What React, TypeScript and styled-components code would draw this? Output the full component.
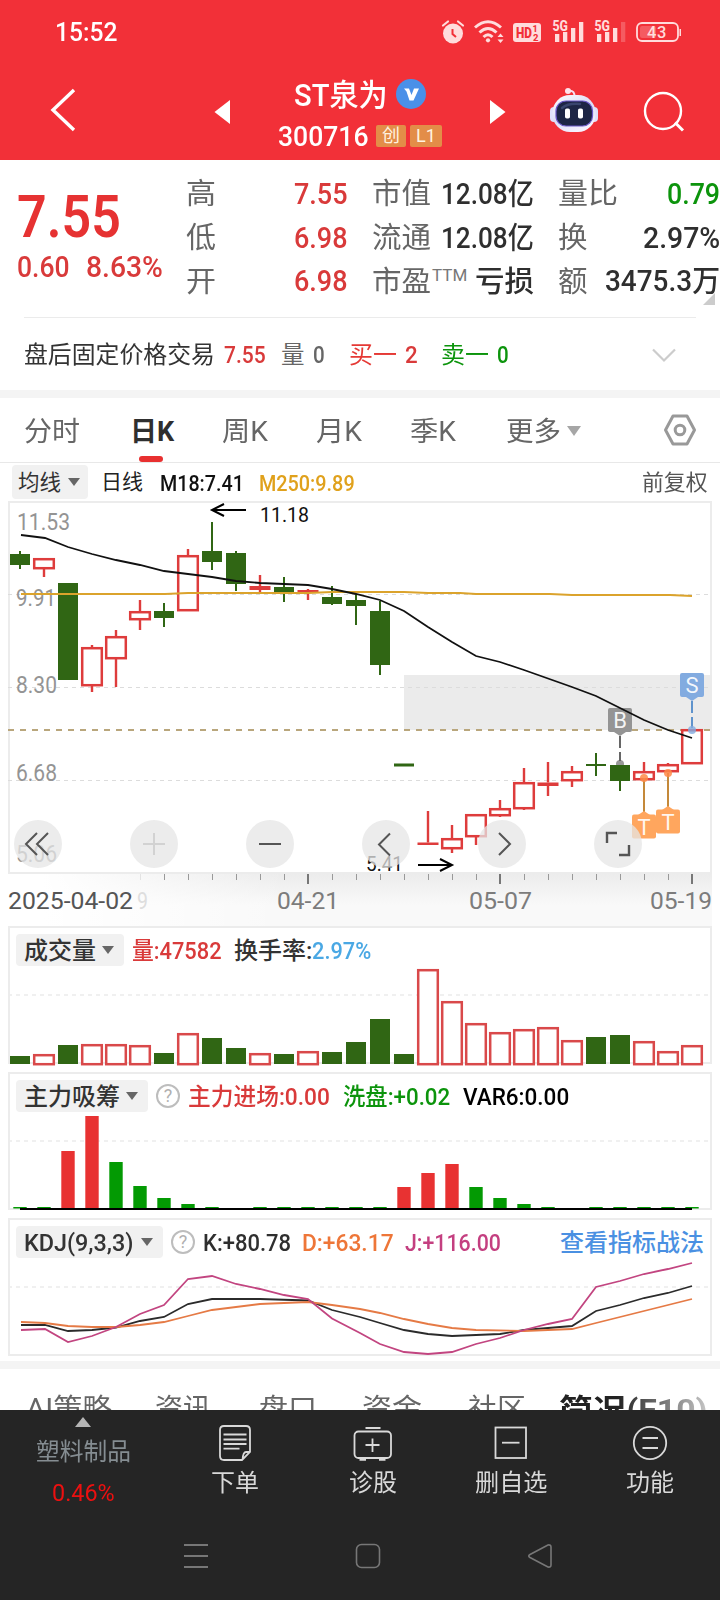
import React, { useLayoutEffect, useRef, useState } from "react";
import styled, { createGlobalStyle, css } from "styled-components";

const GlobalStyle = createGlobalStyle`
  * { box-sizing: border-box; }
  body { margin: 0; background: #fff; }
  svg { display: block; flex: none; }
`;

const FONT = `Roboto, "Noto Sans CJK SC", sans-serif`;
const RED = "#e53935";
const RISE = "#de3c3c";
const GREEN = "#0c940c";
const FALL = "#306614";

/* ---------- text fitted to a fixed measure ---------- */

interface TextStyle {
  $size: number;
  $color: string;
  $weight?: number;
  $ml?: number;
}

const FitBox = styled.span<TextStyle & { $w: number }>`
  flex: none;
  display: block;
  width: ${(p) => p.$w}px;
  margin-left: ${(p) => p.$ml ?? 0}px;
  padding-top: 2px;
  font-size: ${(p) => p.$size}px;
  line-height: 1.2;
  font-weight: ${(p) => p.$weight ?? 500};
  color: ${(p) => p.$color};
`;

const FitInner = styled.span`
  display: inline-block;
  white-space: pre;
  transform-origin: 0 50%;
  vertical-align: top;
`;

function Fit({
  w,
  size,
  color,
  weight,
  ml,
  children,
}: {
  w: number;
  size: number;
  color: string;
  weight?: number;
  ml?: number;
  children: React.ReactNode;
}) {
  const ref = useRef<HTMLSpanElement>(null);
  const [scale, setScale] = useState(1);
  useLayoutEffect(() => {
    if (ref.current) setScale(w / ref.current.offsetWidth);
  }, [w]);
  return (
    <FitBox $w={w} $size={size} $color={color} $weight={weight} $ml={ml}>
      <FitInner ref={ref} style={{ transform: `scaleX(${scale})` }}>
        {children}
      </FitInner>
    </FitBox>
  );
}

/* ---------- page frame ---------- */

const Page = styled.main`
  width: 720px;
  height: 1600px;
  overflow: hidden;
  display: flex;
  flex-direction: column;
  background: #fff;
  font-family: ${FONT};
`;

const Header = styled.header`
  flex: none;
  height: 160px;
  background: #f23038;
`;

const StatusBar = styled.div`
  display: flex;
  align-items: center;
  justify-content: space-between;
  height: 64px;
  padding: 0 38px 0 55px;
`;

const NavBar = styled.div`
  display: flex;
  align-items: flex-start;
  height: 96px;
  padding-left: 50px;
`;

const NavSlot = styled.div<{ $ml: number; $mt: number }>`
  margin-left: ${(p) => p.$ml}px;
  margin-top: ${(p) => p.$mt}px;
`;

const TitleBlock = styled.div`
  width: 164px;
  margin-left: 48px;
  padding-top: 11px;
`;

const TitleRow = styled.div<{ $h: number; $pl?: number }>`
  display: flex;
  align-items: center;
  height: ${(p) => p.$h}px;
  padding-left: ${(p) => p.$pl ?? 0}px;
`;

const Tag = styled.span<{ $w: number }>`
  display: flex;
  align-items: center;
  justify-content: center;
  width: ${(p) => p.$w}px;
  height: 22px;
  margin-left: 4px;
  border-radius: 2px;
  background: #e38d48;
  color: #fff3e0;
  font-size: 18px;
  line-height: 22px;
`;

/* ---------- quote ---------- */

const Quote = styled.section`
  flex: none;
  display: flex;
  height: 157px;
  position: relative;
`;

const PriceCol = styled.div`
  width: 187px;
  padding: 19px 0 0 17px;
`;

const BigPrice = styled.div`
  display: flex;
  align-items: center;
  height: 73px;
`;

const Line = styled.div<{ $h?: number }>`
  display: flex;
  align-items: center;
  height: ${(p) => p.$h ?? 43.4}px;
`;

const StatCol = styled.div<{ $w: number; $ml: number }>`
  width: ${(p) => p.$w}px;
  margin-left: ${(p) => p.$ml}px;
  padding-top: 12px;
`;

const StatRow = styled.div`
  display: flex;
  align-items: center;
  justify-content: space-between;
  height: 43.6px;
`;

const Super = styled.sup`
  font-size: 17px;
  line-height: 1;
  margin: -10px auto 0 1px;
  color: #777;
`;

const Corner = styled.i`
  position: absolute;
  right: 5px;
  bottom: 12px;
  border: 6px solid transparent;
  border-right-color: #ccc;
  border-bottom-color: #ccc;
`;

const Rule = styled.hr`
  flex: none;
  width: 672px;
  height: 1px;
  margin: 0 24px;
  border: 0;
  background: #ebebeb;
`;

const AfterHours = styled.section`
  flex: none;
  display: flex;
  align-items: center;
  height: 72px;
  padding-left: 24px;
`;

const Band = styled.div`
  flex: none;
  height: 8px;
  background: #f4f4f4;
`;

/* ---------- period tabs ---------- */

const Tabs = styled.nav`
  flex: none;
  display: flex;
  height: 65px;
  padding-left: 24px;
  border-bottom: 1px solid #e8e8e8;
`;

const Tab = styled.div<{ $ml?: number; $active?: boolean }>`
  display: flex;
  position: relative;
  align-items: center;
  height: 66px;
  margin-left: ${(p) => p.$ml ?? 0}px;
  ${(p) =>
    p.$active &&
    css`
      &::after {
        content: "";
        position: absolute;
        left: 9px;
        bottom: 2px;
        width: 24px;
        height: 6px;
        border-radius: 3px;
        background: #e83030;
      }
    `}
`;

const Caret = styled.i<{ $ml?: number; $color?: string; $s?: number }>`
  width: 0;
  height: 0;
  margin-left: ${(p) => p.$ml ?? 7}px;
  border: ${(p) => p.$s ?? 6}px solid transparent;
  border-top: ${(p) => (p.$s ?? 6) * 1.45}px solid ${(p) => p.$color ?? "#666"};
  border-bottom: 0;
`;

/* ---------- chart ---------- */

const AverageRow = styled.div`
  flex: none;
  display: flex;
  align-items: center;
  height: 38px;
  padding-left: 12px;
`;

const Pill = styled.div<{ $w: number; $h?: number; $pl?: number }>`
  flex: none;
  display: flex;
  align-items: center;
  width: ${(p) => p.$w}px;
  height: ${(p) => p.$h ?? 32}px;
  padding-left: ${(p) => p.$pl ?? 8}px;
  border-radius: 4px;
  background: #f1f1f1;
`;

const ChartArea = styled.section`
  flex: none;
  position: relative;
  height: 373px;
`;

const Controls = styled.div`
  position: absolute;
  left: 14px;
  top: 319px;
  display: flex;
  gap: 68px;
`;

const Round = styled.button`
  display: flex;
  width: 48px;
  height: 48px;
  padding: 0;
  border: 0;
  border-radius: 50%;
  background: rgba(230, 230, 230, 0.75);
`;

const AxisStrip = styled.div`
  flex: none;
  height: 52px;
  margin-right: 8px;
  background: linear-gradient(90deg, #fff 6%, rgba(255, 255, 255, 0) 40%),
    linear-gradient(#ececec, #f9f9f9 60%);
`;

const Panel = styled.section<{ $mb?: number }>`
  flex: none;
  position: relative;
  width: 704px;
  height: 138px;
  margin: 0 8px ${(p) => p.$mb ?? 8}px;
  border: 2px solid #ececec;
`;

const PanelArt = styled.svg`
  position: absolute;
  left: -10px;
  top: -2px;
  overflow: visible;
`;

const PanelHead = styled.div`
  position: relative;
  display: flex;
  align-items: center;
  height: 32px;
  margin: 6px 0 0 6px;
`;

const Help = styled.span<{ $ml: number }>`
  flex: none;
  width: 24px;
  height: 24px;
  margin-left: ${(p) => p.$ml}px;
  border: 2px solid #bdbdbd;
  border-radius: 50%;
  color: #b0b0b0;
  font-size: 18px;
  line-height: 20px;
  text-align: center;
`;

/* ---------- lower tabs and bottom bar ---------- */

const InfoTabs = styled.nav`
  flex: none;
  display: flex;
  height: 41px;
  padding: 22px 0 0 26px;
  overflow: hidden;
`;

const FadeOut = styled.div`
  -webkit-mask-image: linear-gradient(90deg, #000 50%, rgba(0, 0, 0, 0.25) 100%);
  mask-image: linear-gradient(90deg, #000 50%, rgba(0, 0, 0, 0.25) 100%);
`;

const Bottom = styled.footer`
  flex: none;
  height: 190px;
  background: #252525;
`;

const Actions = styled.div`
  display: flex;
  height: 111px;
`;

const Sector = styled.div`
  display: flex;
  flex-direction: column;
  align-items: center;
  width: 166px;
  padding-top: 7px;
`;

const UpCaret = styled.i`
  border: 8px solid transparent;
  border-bottom: 10px solid #b5b5b5;
  border-top: 0;
  margin-bottom: 9px;
`;

const Action = styled.div`
  display: flex;
  flex-direction: column;
  align-items: center;
  width: 138.2px;
  padding-top: 14px;
  gap: 5px;
`;

const SystemNav = styled.div`
  display: flex;
  align-items: center;
  height: 70px;
  padding-left: 182px;
  gap: 144px;
`;

/* ---------- data ---------- */

type Candle = [up: boolean, top: number, bottom: number, high: number, low: number];

const candles: Candle[] = [
  [false, 554, 565, 551, 569],
  [true, 558, 569, 558, 577],
  [false, 583, 680, 583, 680],
  [true, 647, 686, 645, 692],
  [true, 636, 659, 630, 687],
  [true, 611, 620, 600, 630],
  [false, 611, 618, 603, 627],
  [true, 555, 611, 549, 611],
  [false, 551, 562, 522, 570],
  [false, 553, 584, 551, 591],
  [true, 586, 590, 575, 592],
  [false, 587, 592, 577, 602],
  [true, 590, 593, 589, 600],
  [false, 597, 604, 586, 605],
  [false, 600, 606, 595, 625],
  [false, 611, 665, 601, 675],
  [false, 763.5, 766.5, 764, 766],
  [true, 842.5, 845, 811, 845],
  [true, 838, 849, 825, 853],
  [true, 814, 837, 814, 845],
  [true, 808, 816, 800, 817],
  [true, 782, 809, 768, 810],
  [true, 782.5, 786, 762, 796],
  [true, 771, 781, 766, 787],
  [false, 764, 766, 753, 776],
  [false, 765, 781, 765, 791],
  [true, 771, 780, 762, 780],
  [true, 764, 772, 763, 772],
  [true, 729, 764, 729, 764],
];

const volumeTops = [
  1056, 1054, 1045, 1044, 1044, 1045, 1053, 1033, 1038, 1048, 1053, 1054, 1051, 1052, 1042, 1019,
  1054, 969, 1001, 1023, 1032, 1029, 1027, 1040, 1037, 1035, 1041, 1051, 1045,
];

const flowTops = [
  1207, 1207, 1151, 1116, 1162, 1186, 1198, 1204, 1207, 0, 1207, 1207, 1207, 1207, 1207, 1207, 1187,
  1173, 1164, 1187, 1198, 1204, 1207, 0, 1207, 1207, 1207, 1207, 1207,
];
const flowRed = new Set([2, 3, 16, 17, 18]);

const ma18 =
  "21,535 45,538 68,547 92,554 116,560 140,565 164,571 188,574 212,577 236,581 260,583 284,584 308,585 332,589 356,594 380,600 404,611 428,627 452,642 476,656 500,662 524,670 548,678.5 572,687 596,696 620,708 644,720 668,730 692,738";
const ma250 =
  "21,594 165,594 188,593 308,593 332,592 404,592 428,593 460,593 476,594 550,594 572,595 670,595 692,596";
const kLine =
  "21,1325 45,1325 68,1331 92,1330 116,1327.5 140,1321 164,1317 188,1304 212,1299 260,1299 308,1300.5 332,1310 360,1317 380,1323 404,1330 428,1334 452,1336 500,1334 524,1330 548,1328 572,1326 596,1311 620,1305 644,1298 668,1293 692,1286";
const dLine =
  "21,1322 45,1323 68,1326 92,1327 116,1327 140,1325 164,1322 188,1316 212,1310 260,1304 308,1302 332,1305 360,1309 380,1313 404,1319 428,1324 452,1328 476,1330 524,1331 572,1329 596,1323 644,1311 692,1299";
const jLine =
  "21,1330 45,1329 68,1342 92,1336 116,1327 140,1314 164,1305 188,1279 212,1276 236,1284 260,1289 284,1295 308,1299 332,1318.5 360,1333 380,1344 404,1352 428,1354 452,1352 476,1344 500,1338 524,1330 548,1324 572,1319 596,1287 620,1281 644,1274 668,1269 692,1263";

const xAt = (i: number) => 20 + 24 * i;

/* ---------- drawings ---------- */

function Label({
  x,
  y,
  w,
  children,
  size = 24,
  fill = "#949494",
  weight = 400,
}: {
  x: number;
  y: number;
  w: number;
  children: string;
  size?: number;
  fill?: string;
  weight?: number;
}) {
  return (
    <text
      x={x}
      y={y}
      textLength={w}
      lengthAdjust="spacingAndGlyphs"
      fontSize={size}
      fontWeight={weight}
      fontFamily={FONT}
      fill={fill}
    >
      {children}
    </text>
  );
}

function CandleShape({ candle, x }: { candle: Candle; x: number }) {
  const [up, top, bottom, high, low] = candle;
  if (!up) {
    return (
      <g fill={FALL}>
        <rect x={x - 1} y={high} width={2} height={low - high} />
        <rect x={x - 10} y={top} width={20} height={bottom - top} />
      </g>
    );
  }
  const hollow = bottom - top > 5;
  return (
    <g fill={RISE}>
      {high < top && <rect x={x - 1.2} y={high} width={2.4} height={top - high} />}
      {low > bottom && <rect x={x - 1.2} y={bottom} width={2.4} height={low - bottom} />}
      {hollow ? (
        <rect
          x={x - 9.8}
          y={top + 1.2}
          width={19.6}
          height={bottom - top - 2}
          fill="#fff"
          stroke={RISE}
          strokeWidth={2.5}
        />
      ) : (
        <rect x={x - 10.5} y={top} width={21} height={bottom - top} />
      )}
    </g>
  );
}

function Marker({ x, y, letter, color }: { x: number; y: number; letter: string; color: string }) {
  return (
    <g>
      <rect x={x - 12} y={y} width={24} height={24} rx={2} fill={color} />
      <text
        x={x}
        y={y + 20}
        textAnchor="middle"
        fontSize={22}
        fontFamily={FONT}
        fill="#fff"
        fillOpacity={0.92}
      >
        {letter}
      </text>
    </g>
  );
}

function CandleChart() {
  return (
    <svg width={720} height={373} viewBox="0 501 720 373">
      <rect x={9} y={502} width={702} height={371} fill="none" stroke="#ececec" strokeWidth={2} />
      <rect x={404} y={675} width={308} height={55} fill="#ebebeb" />
      {[594.5, 687.5, 780.5].map((y) => (
        <path key={y} d={`M8 ${y}H708`} stroke="#dcdcdc" strokeDasharray="4 4" />
      ))}
      <path d="M8 730H712" stroke="#b9a67c" strokeWidth={2} strokeDasharray="6 6" />
      <Label x={17} y={530} w={53}>11.53</Label>
      <Label x={16} y={606} w={40}>9.91</Label>
      <Label x={16} y={693} w={41}>8.30</Label>
      <Label x={16} y={781} w={41}>6.68</Label>
      <Label x={16} y={862} w={41}>5.06</Label>

      <circle cx={620} cy={764} r={4} fill="#999" />
      {candles.map((c, i) => (
        <CandleShape key={i} candle={c} x={xAt(i)} />
      ))}
      <polyline points={ma250} fill="none" stroke="#dba32c" strokeWidth={2} />

      <path d="M620 736V748M620 752V761" stroke="#666" strokeWidth={2} />
      <path d="M614 732l6 4l6-4z" fill="#949494" />
      <Marker x={620} y={708} letter="B" color="#949494" />
      <path d="M692 701V713M692 717V728" stroke="#5f93cc" strokeWidth={2} />
      <path d="M686 697l6 4l6-4z" fill="#82abe0" />
      <circle cx={692} cy={730} r={4} fill="#82abe0" fillOpacity={0.8} />
      <Marker x={692} y={673} letter="S" color="#82abe0" />
      <path d="M644 778V812M668 773V807" stroke="#c4893a" strokeWidth={2} />
      <circle cx={644} cy={778} r={4} fill="#ff8a48" fillOpacity={0.85} />
      <circle cx={668} cy={773} r={4} fill="#ff8a48" fillOpacity={0.85} />
      <path d="M638 815l6-4l6 4zM662 810l6-4l6 4z" fill="#ffa65e" />
      <Marker x={644} y={814.5} letter="T" color="#ffa65e" />
      <Marker x={668} y={809.5} letter="T" color="#ffa65e" />

      <polyline points={ma18} fill="none" stroke="#111" strokeWidth={1.8} />
      <path d="M246 510H212M224 504L212 510L224 516" fill="none" stroke="#000" strokeWidth={2} />
      <Label x={260} y={522} w={49} size={20} fill="#111">11.18</Label>
      <path d="M418 865H452M440 859L452 865L440 871" fill="none" stroke="#000" strokeWidth={2} />
      <Label x={366} y={871} w={37} size={20} fill="#111">5.41</Label>
    </svg>
  );
}

function Axis() {
  const ticks = Array.from({ length: 23 }, (_, i) => 164 + 24 * i);
  const major = [308, 500, 692];
  return (
    <svg width={720} height={52} viewBox="0 874 720 52">
      <path d="M140.5 874v6" stroke="#e3e3e3" />
      {ticks.map((x) =>
        major.includes(x) ? (
          <path key={x} d={`M${x} 874v10`} stroke="#777" strokeWidth={2} />
        ) : (
          <path key={x} d={`M${x + 0.5} 874v6`} stroke="#999" />
        )
      )}
      <Label x={8} y={909} w={125} fill="#555">2025-04-02</Label>
      <Label x={137} y={909} w={11} fill="#dedede">9</Label>
      <Label x={277} y={909} w={62} fill="#7c7c7c">04-21</Label>
      <Label x={469} y={909} w={63} fill="#7c7c7c">05-07</Label>
      <Label x={650} y={909} w={62} fill="#7c7c7c">05-19</Label>
    </svg>
  );
}

function VolumeArt() {
  return (
    <PanelArt width={720} height={138} viewBox="0 926 720 138">
      <path d="M8 995H708" stroke="#ebebeb" strokeWidth={1.6} strokeDasharray="4 4" />
      {volumeTops.map((top, i) =>
        candles[i][0] ? (
          <rect
            key={i}
            x={xAt(i) - 9.8}
            y={top + 1.2}
            width={19.6}
            height={1063 - top}
            fill="#fff"
            stroke="#d9494a"
            strokeWidth={2.5}
          />
        ) : (
          <rect key={i} x={xAt(i) - 10} y={top} width={20} height={1064 - top} fill={FALL} />
        )
      )}
    </PanelArt>
  );
}

function FlowArt() {
  return (
    <PanelArt width={720} height={138} viewBox="0 1072 720 138">
      <path d="M8 1141H708" stroke="#ebebeb" strokeWidth={1.6} strokeDasharray="4 4" />
      {flowTops.map((top, i) =>
        top ? (
          <rect
            key={i}
            x={xAt(i) - 6.7}
            y={top}
            width={13.4}
            height={1208.5 - top}
            fill={flowRed.has(i) ? "#e83232" : "#039a03"}
          />
        ) : null
      )}
      <path d="M20 1209H692" stroke="#000" strokeWidth={2} />
    </PanelArt>
  );
}

function KdjArt() {
  return (
    <PanelArt width={720} height={138} viewBox="0 1218 720 138">
      <path d="M8 1287H708" stroke="#ebebeb" strokeWidth={1.6} strokeDasharray="4 4" />
      <g fill="none" strokeWidth={1.8}>
        <polyline points={kLine} stroke="#2b2b2b" />
        <polyline points={dLine} stroke="#e57a45" />
        <polyline points={jLine} stroke="#c24580" />
      </g>
    </PanelArt>
  );
}

function StatusIcons() {
  const ink = "#ffdcdc";
  return (
    <svg width={242} height={28} viewBox="440 18 242 28" fill={ink} fontFamily={FONT}>
      <circle cx={453} cy={33.5} r={10} />
      <path
        d="M443 25.5l5-4M463 25.5l-5-4"
        stroke={ink}
        strokeWidth={2.2}
        strokeLinecap="round"
      />
      <path d="M452.5 29v5l3.5 3" fill="none" stroke="#f23038" strokeWidth={2} />
      <g fill="none" stroke={ink} strokeWidth={3}>
        <path d="M475 27.5q13-11.5 26 0" />
        <path d="M479.5 32.5q8.5-8 17 0" />
        <path d="M483.5 37q4.5-4.5 9 0" />
      </g>
      <circle cx={488} cy={40.3} r={2.1} />
      <path d="M497.5 37l3-3.5l3 3.5zM497.5 39.5l3 3.5l3-3.5z" />
      <rect x={513} y={23} width={28} height={19} rx={3} />
      <text x={516} y={38} fontSize={15.5} fontWeight={900} fill="#f23038" textLength={16} lengthAdjust="spacingAndGlyphs">
        HD
      </text>
      <text x={532.5} y={31.5} fontSize={9} fontWeight={800} fill="#f23038">1</text>
      <text x={533} y={40.5} fontSize={9.5} fontWeight={800} fill="#f23038">2</text>
      <text x={552.5} y={31} fontSize={14} fontWeight={800} textLength={15.5} lengthAdjust="spacingAndGlyphs">
        5G
      </text>
      <path d="M555 34h4.3v8h-4.3zM563 32h4.3v10h-4.3zM571 28h4.3v14h-4.3zM579 22h4.3v20h-4.3z" />
      <text x={594.5} y={31} fontSize={14} fontWeight={800} textLength={15.5} lengthAdjust="spacingAndGlyphs">
        5G
      </text>
      <path d="M597 34h4.3v8h-4.3zM605 32h4.3v10h-4.3zM613 28h4.3v14h-4.3z" />
      <path d="M621 22h4.3v20h-4.3z" opacity={0.25} />
      <rect x={640} y={26} width={16} height={12} rx={2} opacity={0.25} />
      <rect x={637} y={23} width={41} height={18} rx={5} fill="none" stroke={ink} strokeWidth={1.8} />
      <path d="M679.5 29h1.5v7h-1.5z" />
      <text x={657} y={38} fontSize={16.5} fontWeight={500} textAnchor="middle" letterSpacing={0.5}>
        43
      </text>
    </svg>
  );
}

function Robot() {
  return (
    <svg width={50} height={46} viewBox="549 87 50 46">
      <defs>
        <linearGradient id="shell" x1="0" y1="0" x2="0.6" y2="1">
          <stop offset="0" stopColor="#ffffff" />
          <stop offset="0.55" stopColor="#dcdcf6" />
          <stop offset="1" stopColor="#f6f2ff" />
        </linearGradient>
      </defs>
      <path d="M574.5 97c0-5-1-6-5.5-6.5" fill="none" stroke="#f7dff0" strokeWidth={2} />
      <circle cx={568} cy={91} r={3} fill="#ffe3ec" />
      <rect x={550} y={107} width={8} height={15} rx={4} fill="#dfe0fa" />
      <rect x={590} y={107} width={8} height={15} rx={4} fill="#dfe0fa" />
      <rect x={552.5} y={95} width={43} height={37} rx={17.5} fill="url(#shell)" />
      <rect x={556} y={101} width={36.5} height={25} rx={10} fill="#1d2545" stroke="#6a58c8" strokeWidth={1.2} />
      <path d="M562 108q6-5 18-4" stroke="#39456e" strokeWidth={2.5} fill="none" strokeLinecap="round" />
      <rect x={565} y={108.5} width={5} height={10} rx={1.8} fill="#fff" />
      <rect x={578} y={108.5} width={5} height={10} rx={1.8} fill="#fff" />
    </svg>
  );
}

const stroke = { fill: "none", stroke: "#d9d9d9", strokeWidth: 1.8 } as const;

const OrderIcon = () => (
  <svg width={40} height={38} viewBox="215 1424 40 38" {...stroke}>
    <path d="M224 1426H246Q250 1426 250 1430V1452L242 1460H224Q220 1460 220 1456V1430Q220 1426 224 1426ZM250 1452H246Q243 1452 242.5 1460" />
    <path d="M223.5 1434.5H246.5M223.5 1439.5H246.5M223.5 1444H246.5M223.5 1448.7H239.5" />
  </svg>
);

const DoctorIcon = () => (
  <svg width={40} height={38} viewBox="353.5 1424 40 38" {...stroke}>
    <rect x={355} y={1431.5} width={36.5} height={26.5} rx={4} />
    <path d="M366 1428H381M373 1438.5V1452M366 1445H380" />
    <path d="M360 1459.5H366.5M379.5 1459.5H386" strokeWidth={2.5} />
  </svg>
);

const RemoveIcon = () => (
  <svg width={40} height={38} viewBox="491 1424 40 38" {...stroke}>
    <rect x={495.5} y={1427.5} width={30.5} height={30.5} />
    <path d="M502 1442.7H519.5" />
  </svg>
);

const MoreIcon = () => (
  <svg width={40} height={38} viewBox="630 1424 40 38" {...stroke}>
    <circle cx={650} cy={1443} r={16.2} />
    <path d="M642.5 1438H658M642.5 1448H658" />
  </svg>
);

const ctl = { width: 48, height: 48, viewBox: "0 0 48 48", fill: "none", stroke: "#555", strokeWidth: 2 };

/* ---------- app ---------- */

export default function App() {
  const label = "#666";
  const ink = "#2f2f2f";
  const off = "#d9d9d9";
  return (
    <Page>
      <GlobalStyle />
      <Header>
        <StatusBar>
          <Fit w={62} size={25} color="#fff" weight={500}>15:52</Fit>
          <StatusIcons />
        </StatusBar>
        <NavBar>
          <NavSlot $ml={0} $mt={24}>
            <svg width={26} height={44} viewBox="50 88 26 44">
              <path d="M74 90L53 110L74 130" fill="none" stroke="#fff" strokeWidth={3.4} />
            </svg>
          </NavSlot>
          <NavSlot $ml={138} $mt={36}>
            <svg width={16} height={24} viewBox="0 0 16 24">
              <path d="M0.5 12L16 0V24Z" fill="#fff" />
            </svg>
          </NavSlot>
          <TitleBlock>
            <TitleRow $h={39} $pl={16}>
              <Fit w={94} size={31} color="#fff">ST泉为</Fit>
              <NavSlot $ml={8} $mt={-2}>
                <svg width={30} height={30} viewBox="0 0 30 30">
                  <circle cx={15} cy={15} r={15} fill="#4a90e8" />
                  <path d="M8 9.5H13L15.5 16L18 9.5H23L17.5 21.5H13.5L10.5 12.5Z" fill="#fff" />
                </svg>
              </NavSlot>
            </TitleRow>
            <TitleRow $h={44}>
              <Fit w={90} size={28} color="#fff">300716</Fit>
              <NavSlot $ml={4} $mt={0}>
                <Tag $w={30}>创</Tag>
              </NavSlot>
              <Tag $w={32}>L1</Tag>
            </TitleRow>
          </TitleBlock>
          <NavSlot $ml={48} $mt={36}>
            <svg width={16} height={24} viewBox="0 0 16 24">
              <path d="M15.5 12L0 0V24Z" fill="#fff" />
            </svg>
          </NavSlot>
          <NavSlot $ml={43} $mt={23}>
            <Robot />
          </NavSlot>
          <NavSlot $ml={43} $mt={26}>
            <svg width={44} height={44} viewBox="642 90 44 44" fill="none" stroke="#fff" strokeWidth={2.4}>
              <circle cx={663} cy={111} r={18} />
              <path d="M675 122.5L683 130.5" strokeWidth={3} />
            </svg>
          </NavSlot>
        </NavBar>
      </Header>

      <Quote>
        <PriceCol>
          <BigPrice>
            <Fit w={104} size={60} color="#e63232" weight={600}>7.55</Fit>
          </BigPrice>
          <Line $h={28}>
            <Fit w={53} size={29} color="#d93a3a">0.60</Fit>
            <Fit w={77} size={29} color="#d93a3a" ml={16}>8.63%</Fit>
          </Line>
        </PriceCol>
        <StatCol $w={162} $ml={-1}>
          {[
            ["高", "7.55"],
            ["低", "6.98"],
            ["开", "6.98"],
          ].map(([k, v]) => (
            <StatRow key={k}>
              <Fit w={30} size={29} color={label} weight={400}>{k}</Fit>
              <Fit w={54} size={29.5} color="#d93a3a">{v}</Fit>
            </StatRow>
          ))}
        </StatCol>
        <StatCol $w={162} $ml={24}>
          <StatRow>
            <Fit w={59} size={29} color={label} weight={400}>市值</Fit>
            <Fit w={93} size={29.5} color={ink}>12.08亿</Fit>
          </StatRow>
          <StatRow>
            <Fit w={59} size={29} color={label} weight={400}>流通</Fit>
            <Fit w={93} size={29.5} color={ink}>12.08亿</Fit>
          </StatRow>
          <StatRow>
            <Fit w={59} size={29} color={label} weight={400}>市盈</Fit>
            <Super>TTM</Super>
            <Fit w={59} size={29} color={ink}>亏损</Fit>
          </StatRow>
        </StatCol>
        <StatCol $w={162} $ml={24}>
          <StatRow>
            <Fit w={60} size={29} color={label} weight={400}>量比</Fit>
            <Fit w={53.5} size={29.5} color={GREEN}>0.79</Fit>
          </StatRow>
          <StatRow>
            <Fit w={29.5} size={29} color={label} weight={400}>换</Fit>
            <Fit w={77} size={29.5} color={ink}>2.97%</Fit>
          </StatRow>
          <StatRow>
            <Fit w={29.5} size={29} color={label} weight={400}>额</Fit>
            <Fit w={115.5} size={29.5} color={ink}>3475.3万</Fit>
          </StatRow>
        </StatCol>
        <Corner />
      </Quote>
      <Rule />
      <AfterHours>
        <Fit w={191} size={23.5} color="#333" weight={400}>盘后固定价格交易</Fit>
        <Fit w={42} size={24} color="#d93a3a" ml={9}>7.55</Fit>
        <Fit w={24} size={23.5} color={label} weight={400} ml={15}>量</Fit>
        <Fit w={12} size={24} color={label} ml={8}>0</Fit>
        <Fit w={48} size={23.5} color={RED} weight={400} ml={24}>买一</Fit>
        <Fit w={13} size={24} color="#d93a3a" ml={8}>2</Fit>
        <Fit w={48} size={23.5} color={GREEN} weight={400} ml={23}>卖一</Fit>
        <Fit w={12} size={24} color={GREEN} ml={8}>0</Fit>
        <NavSlot $ml={142} $mt={2}>
          <svg width={26} height={16} viewBox="651 346 26 16">
            <path d="M653 348.5L664 359.5L675 348.5" fill="none" stroke="#ccc" strokeWidth={2.2} />
          </svg>
        </NavSlot>
      </AfterHours>
      <Band />

      <Tabs>
        <Tab>
          <Fit w={56} size={27} color={label} weight={400}>分时</Fit>
        </Tab>
        <Tab $ml={50} $active>
          <Fit w={44} size={27} color={ink} weight={700}>日K</Fit>
        </Tab>
        <Tab $ml={48}>
          <Fit w={46} size={27} color={label} weight={400}>周K</Fit>
        </Tab>
        <Tab $ml={48}>
          <Fit w={46} size={27} color={label} weight={400}>月K</Fit>
        </Tab>
        <Tab $ml={48}>
          <Fit w={46} size={27} color={label} weight={400}>季K</Fit>
        </Tab>
        <Tab $ml={50}>
          <Fit w={55} size={27} color={label} weight={400}>更多</Fit>
          <Caret $ml={6} $s={7.5} $color="#a6a6a6" />
        </Tab>
        <Tab $ml={82}>
          <svg width={34} height={34} viewBox="663 414 34 34" fill="none" stroke="#999" strokeWidth={3} strokeLinejoin="round">
            <path d="M665.5 430L673 416H687L694.5 430L687 444H673Z" />
            <circle cx={680} cy={430} r={4.8} />
          </svg>
        </Tab>
      </Tabs>

      <AverageRow>
        <Pill $w={76} $h={34} $pl={6}>
          <Fit w={43} size={21.5} color="#333" weight={400}>均线</Fit>
          <Caret $ml={7} />
        </Pill>
        <Fit w={42} size={21} color="#222" weight={400} ml={13}>日线</Fit>
        <Fit w={84} size={22.5} color="#111" ml={17}>M18:7.41</Fit>
        <Fit w={96} size={22.5} color="#e0a11c" ml={15}>M250:9.89</Fit>
        <Fit w={66} size={21.5} color="#555" weight={400} ml={287}>前复权</Fit>
      </AverageRow>

      <ChartArea>
        <CandleChart />
        <Controls>
          <Round>
            <svg {...ctl}><path d="M23 13L12 24L23 35M34 13L23 24L34 35" /></svg>
          </Round>
          <Round>
            <svg {...ctl} stroke="#d2d2d2"><path d="M13 24H35M24 13V35" /></svg>
          </Round>
          <Round>
            <svg {...ctl}><path d="M13 24H35" /></svg>
          </Round>
          <Round>
            <svg {...ctl}><path d="M28 13.5L17 24.5L28 35.5" /></svg>
          </Round>
          <Round>
            <svg {...ctl}><path d="M21 13L32 24L21 35" /></svg>
          </Round>
          <Round>
            <svg {...ctl} strokeWidth={2.4}><path d="M13 23V13H23M25 35H35V25" /></svg>
          </Round>
        </Controls>
      </ChartArea>
      <AxisStrip>
        <Axis />
      </AxisStrip>

      <Panel>
        <VolumeArt />
        <PanelHead>
          <Pill $w={108}>
            <Fit w={72} size={24} color="#333">成交量</Fit>
            <Caret $ml={6} />
          </Pill>
          <Fit w={90} size={24} color="#d93a3a" ml={8}>量:47582</Fit>
          <Fit w={78} size={24} color="#333" ml={12}>换手率:</Fit>
          <Fit w={59} size={24} color="#4aa8e4">2.97%</Fit>
        </PanelHead>
      </Panel>
      <Panel>
        <FlowArt />
        <PanelHead>
          <Pill $w={132}>
            <Fit w={96} size={24} color="#333">主力吸筹</Fit>
            <Caret $ml={6} />
          </Pill>
          <Help $ml={8}>?</Help>
          <Fit w={142} size={24} color="#d93a3a" ml={8}>主力进场:0.00</Fit>
          <Fit w={107} size={24} color={GREEN} ml={13}>洗盘:+0.02</Fit>
          <Fit w={106} size={24} color="#000" ml={13}>VAR6:0.00</Fit>
        </PanelHead>
      </Panel>
      <Panel $mb={5}>
        <KdjArt />
        <PanelHead>
          <Pill $w={147}>
            <Fit w={110} size={24} color="#333">KDJ(9,3,3)</Fit>
            <Caret $ml={7} />
          </Pill>
          <Help $ml={8}>?</Help>
          <Fit w={88} size={24} color={ink} ml={8}>K:+80.78</Fit>
          <Fit w={92} size={24} color="#ee7638" ml={11}>D:+63.17</Fit>
          <Fit w={96} size={24} color="#c43f80" ml={11}>J:+116.00</Fit>
          <Fit w={144} size={24} color="#4a90e2" ml={59}>查看指标战法</Fit>
        </PanelHead>
      </Panel>
      <Band />

      <InfoTabs>
        <Fit w={86} size={27} color={label} weight={400}>AI策略</Fit>
        <Fit w={56} size={27} color={label} weight={400} ml={43}>资讯</Fit>
        <Fit w={58} size={27} color={label} weight={400} ml={48}>盘口</Fit>
        <Fit w={60} size={27} color={label} weight={400} ml={45}>资金</Fit>
        <Fit w={58} size={27} color={label} weight={400} ml={46}>社区</Fit>
        <FadeOut>
          <Fit w={149} size={29} color="#222" weight={700} ml={33}>简况(F10)</Fit>
        </FadeOut>
      </InfoTabs>

      <Bottom>
        <Actions>
          <Sector>
            <UpCaret />
            <Fit w={95} size={24} color="#858d92" weight={400}>塑料制品</Fit>
            <NavSlot $ml={0} $mt={9}>
              <Fit w={63} size={24.5} color="#ec1010" weight={400}>0.46%</Fit>
            </NavSlot>
          </Sector>
          <Action>
            <OrderIcon />
            <Fit w={48} size={23.5} color={off} weight={400}>下单</Fit>
          </Action>
          <Action>
            <DoctorIcon />
            <Fit w={48} size={23.5} color={off} weight={400}>诊股</Fit>
          </Action>
          <Action>
            <RemoveIcon />
            <Fit w={73} size={23.5} color={off} weight={400}>删自选</Fit>
          </Action>
          <Action>
            <MoreIcon />
            <Fit w={48} size={23.5} color={off} weight={400}>功能</Fit>
          </Action>
        </Actions>
        <SystemNav>
          <svg width={28} height={28} viewBox="182 1542 28 28" stroke="#777" strokeWidth={1.8}>
            <path d="M184 1545H208M184 1556H208M184 1567H208" />
          </svg>
          <svg width={28} height={28} viewBox="354 1542 28 28" fill="none" stroke="#777" strokeWidth={1.6}>
            <rect x={356.5} y={1544.5} width={23} height={23} rx={5} />
          </svg>
          <svg width={28} height={28} viewBox="526 1542 28 28" fill="none" stroke="#777" strokeWidth={1.6} strokeLinejoin="round">
            <path d="M530 1554.5L548 1545Q551 1544.5 551 1547V1565Q551 1567.5 548 1567L530 1557.5Q527.5 1556 530 1554.5Z" />
          </svg>
        </SystemNav>
      </Bottom>
    </Page>
  );
}
